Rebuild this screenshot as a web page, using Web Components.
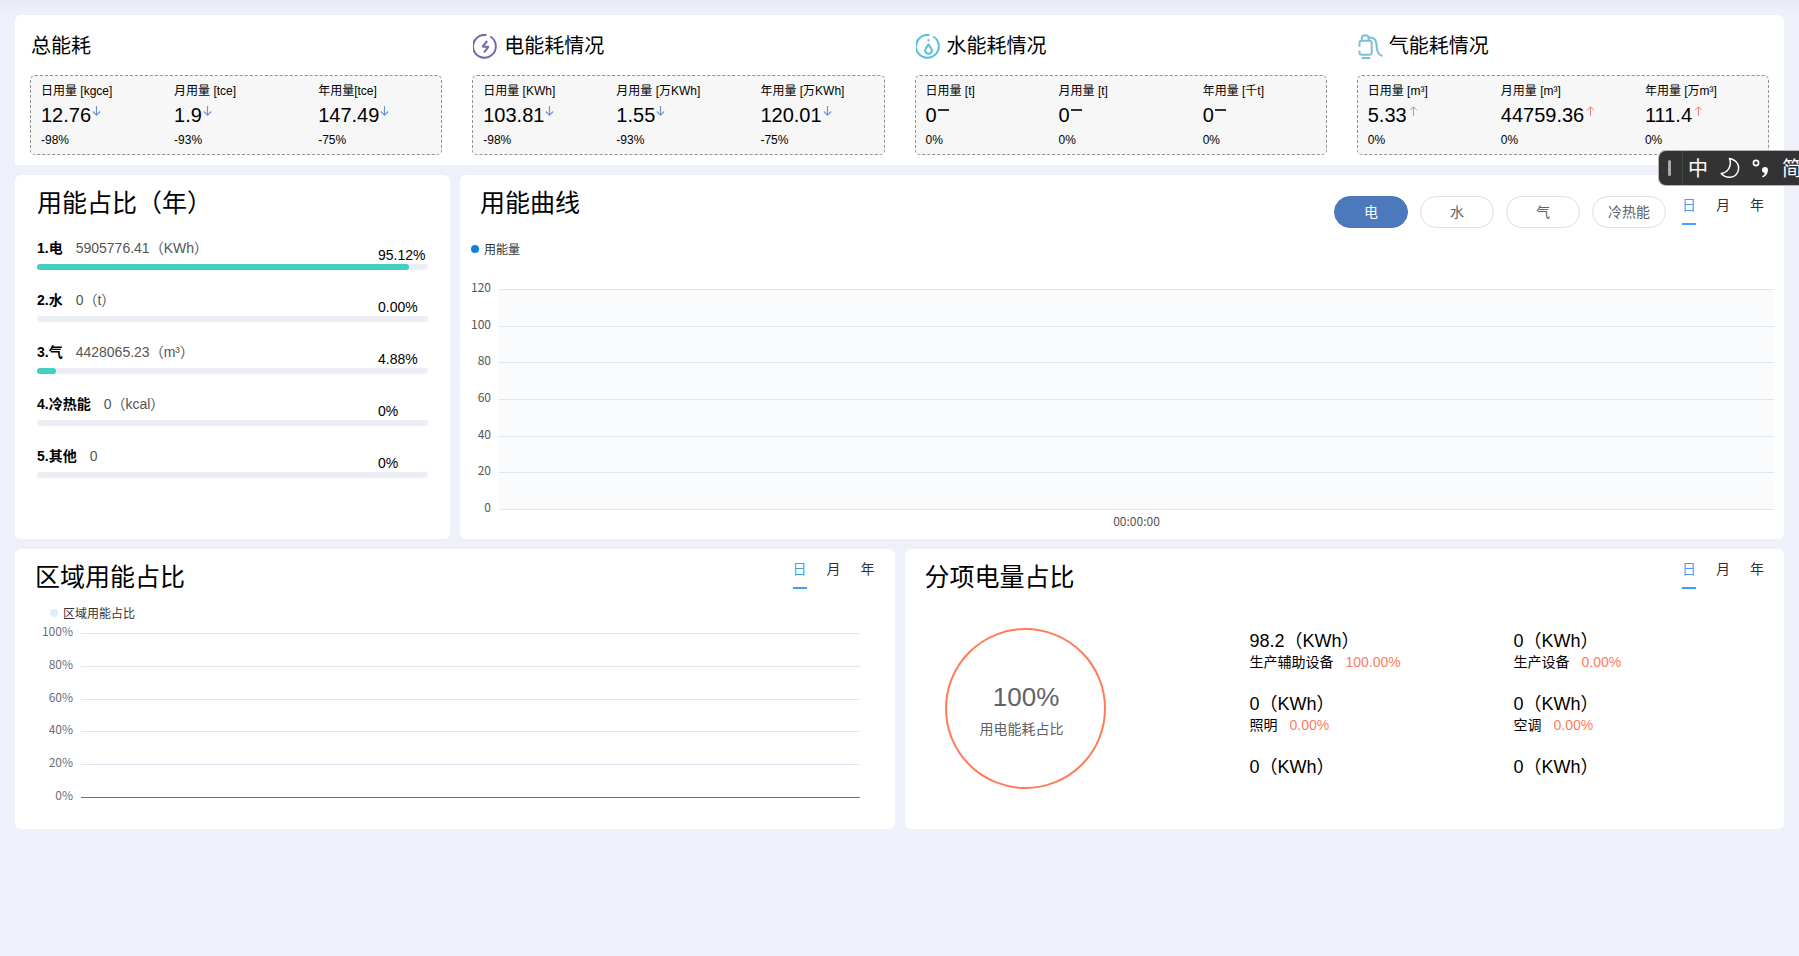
<!DOCTYPE html>
<html lang="zh-CN">
<head>
<meta charset="utf-8">
<title>能耗总览</title>
<style>
  html { background: #eef1f9; }
  body {
    margin: 0;
    overflow-x: hidden;
    font-family: "Liberation Sans", "Noto Sans CJK SC", sans-serif;
    font-size: 14px;
    color: #000;
  }
</style>
</head>
<body>
<energy-dashboard></energy-dashboard>

<template id="t-dashboard">
  <style>
    :host { display: block; padding: 15px; box-sizing: border-box; min-height: 100vh;
      background: linear-gradient(#e6e9f1, #eef1f9 12px) no-repeat #eef1f9; }
    main { display: grid; gap: 10px; }
    .summary { display: grid; grid-template-columns: repeat(4, minmax(0, 1fr));
      background: #fff; border-radius: 6px 6px 0 0; padding-bottom: 10px; }
    .middle { display: grid; grid-template-columns: 435fr 1324fr; gap: 10px; }
    .bottom { display: grid; grid-template-columns: 1fr 1fr; gap: 10px; }
    .middle > * { min-height: 364px; min-width: 0; }
    .bottom > * { min-height: 280px; min-width: 0; }
    .share-card { --inset: 22px; }
    .shares { display: grid; gap: 20px; padding: 19px 22px 0; }
    period-tabs.low { margin-top: 10px; }
    kind-pills { margin: 21px 16px 0 0; }
    .curve { padding: 13px 10px 10px 11px; --axis: 20px; --legend-gap: 32px; --plot: 221px; --fill: #fafbfd; --label: #555; --base: #e0e6f1; }
    .area { padding: 12px 35px 0 25px; --axis: 33px; --legend-gap: 12px; --plot: 165px; --label: #6e7079; --base: #6e7079; --legend-indent: 10px; }
    .items { display: flex; padding: 35px 20px 0; align-items: flex-start; }
    usage-ring { margin: 0 144px 0 20px; }
    .list { flex: 1; display: grid; grid-template-columns: 264px 1fr; row-gap: 21px; }
  </style>
  <main>
    <section class="summary">
      <metric-group heading="总能耗" data="日用量 [kgce]|12.76|down|-98%;月用量 [tce]|1.9|down|-93%;年用量[tce]|147.49|down|-75%"></metric-group>
      <metric-group heading="电能耗情况" icon="power" data="日用量 [KWh]|103.81|down|-98%;月用量 [万KWh]|1.55|down|-93%;年用量 [万KWh]|120.01|down|-75%"></metric-group>
      <metric-group heading="水能耗情况" icon="water" data="日用量 [t]|0|flat|0%;月用量 [t]|0|flat|0%;年用量 [千t]|0|flat|0%"></metric-group>
      <metric-group heading="气能耗情况" icon="gas" data="日用量 [m³]|5.33|up|0%;月用量 [m³]|44759.36|up|0%;年用量 [万m³]|111.4|up|0%"></metric-group>
    </section>
    <div class="middle">
      <panel-card class="share-card" heading="用能占比（年）">
        <div class="shares">
          <share-row name="1.电" amount="5905776.41（KWh）" percent="95.12%"></share-row>
          <share-row name="2.水" amount="0（t）" percent="0.00%"></share-row>
          <share-row name="3.气" amount="4428065.23（m³）" percent="4.88%"></share-row>
          <share-row name="4.冷热能" amount="0（kcal）" percent="0%"></share-row>
          <share-row name="5.其他" amount="0" percent="0%"></share-row>
        </div>
      </panel-card>
      <panel-card heading="用能曲线">
        <kind-pills slot="actions"></kind-pills>
        <period-tabs slot="actions" class="low"></period-tabs>
        <grid-chart class="curve" legend="用能量" dot="#0a84d8" ticks="120,100,80,60,40,20,0" category="00:00:00"></grid-chart>
      </panel-card>
    </div>
    <div class="bottom">
      <panel-card heading="区域用能占比">
        <period-tabs slot="actions"></period-tabs>
        <grid-chart class="area" legend="区域用能占比" dot="#dbefff" ticks="100%,80%,60%,40%,20%,0%"></grid-chart>
      </panel-card>
      <panel-card heading="分项电量占比">
        <period-tabs slot="actions"></period-tabs>
        <div class="items">
          <usage-ring value="100%" caption="用电能耗占比"></usage-ring>
          <div class="list">
            <usage-item value="98.2（KWh）" name="生产辅助设备" percent="100.00%"></usage-item>
            <usage-item value="0（KWh）" name="生产设备" percent="0.00%"></usage-item>
            <usage-item value="0（KWh）" name="照明" percent="0.00%"></usage-item>
            <usage-item value="0（KWh）" name="空调" percent="0.00%"></usage-item>
            <usage-item value="0（KWh）"></usage-item>
            <usage-item value="0（KWh）"></usage-item>
          </div>
        </div>
      </panel-card>
    </div>
  </main>
  <ime-bar></ime-bar>
</template>

<template id="t-panel">
  <style>
    :host { display: block; background: #fff; border-radius: 6px; }
    header { display: flex; align-items: flex-start; padding: 0 20px 0 var(--inset, 20px); min-height: 44px; }
    h2 { margin: 0 auto 0 0; padding-top: 12px; font-size: 25px; line-height: 32px; font-weight: 400; }
  </style>
  <header><h2></h2><slot name="actions"></slot></header>
  <slot></slot>
</template>

<template id="t-tabs">
  <style>
    :host { display: flex; gap: 20px; }
    button { all: unset; font-size: 14px; line-height: 40px; height: 38px; color: #303133; border-bottom: 2px solid transparent; cursor: pointer; }
    button[aria-pressed="true"] { color: #409eff; border-color: #409eff; }
  </style>
  <button aria-pressed="true">日</button><button aria-pressed="false">月</button><button aria-pressed="false">年</button>
</template>

<template id="t-pills">
  <style>
    :host { display: flex; gap: 12px; }
    button { box-sizing: border-box; width: 74px; height: 32px; padding: 0; border: 1px solid #dcdfe6; border-radius: 16px;
      background: #fff; color: #606266; font: inherit; font-size: 14px; line-height: 30px; cursor: pointer; }
    button[aria-pressed="true"] { background: #4b79bc; border-color: #4b79bc; color: #fff; }
  </style>
  <button aria-pressed="true">电</button><button aria-pressed="false">水</button><button aria-pressed="false">气</button><button aria-pressed="false">冷热能</button>
</template>

<template id="t-ime">
  <style>
    :host { position: absolute; right: 0; top: 150px; width: 141px; height: 36px; box-sizing: border-box; overflow: hidden;
      display: flex; align-items: center; background: #333; color: #fff; border: 1px solid #b5b5b5; border-right: 0;
      border-radius: 8px 0 0 8px; font-size: 20px; line-height: 34px; }
    i { flex: none; width: 3px; height: 16px; margin: 0 11px 0 9px; border-radius: 2px; background: #aaa; }
    b { flex: none; width: 1px; height: 34px; margin-right: 5px; background: #484848; }
    span, svg { flex: none; }
    span { padding-top: 2px; }
    svg.moon { margin: 0 12px; }
    svg.mark { margin-right: 13px; }
  </style>
  <i></i><b></b><span>中</span>
  <svg class="moon" width="20" height="22" viewBox="0 0 20 22" fill="none" stroke="#fff" stroke-width="1.5" stroke-linejoin="round"><path d="M9.5 1.5C17 3 20.500 9 17.500 15.500C14.500 21.500 6 22 1.200 16.500C8.500 15.500 12 8.500 9.500 1.500Z"/></svg>
  <svg class="mark" width="17" height="22" viewBox="0 0 17 22"><circle cx="4" cy="6" r="2.600" fill="none" stroke="#fff" stroke-width="1.600"/><path d="M10 19.200c2-.9 2.700-2 2.700-3.300a3 3 0 1 1 3.300-3.300c0 4-2 6.800-5.200 7.800z" fill="#fff"/></svg>
  <span>简</span>
</template>

<script>
  const ICONS = {
    power: '<svg width="25" height="25" viewBox="0 0 25 25" fill="none" stroke="#7469ae" stroke-width="2"><path d="M17.200 2.500A11.400 11.400 0 1 1 13.400 1.100"/><path d="M14.200 7L9.600 12.700H15.600L11 18.400" stroke-linejoin="bevel"/></svg>',
    water: '<svg width="25" height="25" viewBox="0 0 25 25" fill="none" stroke="#5bbfd6" stroke-width="2"><path d="M17.200 2.500A11.400 11.400 0 1 1 13.400 1.100"/><path d="M12.500 10.400c-1.900 2.600-3.400 4.400-3.400 6a3.400 3.400 0 0 0 6.800 0c0-1.600-1.500-3.400-3.400-6z" stroke-linejoin="round"/><path d="M12.500 5.200v2.200"/></svg>',
    gas: '<svg width="25" height="25" viewBox="0 0 25 25" fill="none" stroke="#80bdda" stroke-width="2"><path d="M1.500 13V9Q1.500 6.800 3.700 6.800H11.500Q13.700 6.800 13.700 9V18.500Q13.700 20.700 11.500 20.700H3.700Q1.500 20.700 1.500 18.500V16.500"/><path d="M3.800 6.600V4Q3.800 1.200 7.200 1.200Q10.600 1.200 10.600 4V6.600M3.500 24H12.200M11 3.500C18.500 3 18.500 9 18.800 14Q19.300 20.500 24.500 22"/></svg>'
  };
  const TRENDS = {
    down: '<svg class="down" width="9" height="10" viewBox="0 0 9 10" fill="none" stroke="#7394cb" stroke-width="1.200"><path d="M4.500 0V9M.8 5.500L4.500 9.200L8.200 5.500"/></svg>',
    up: '<svg class="up" width="9" height="10" viewBox="0 0 9 10" fill="none" stroke="#f08080" stroke-width="1"><path d="M4.500 10V1M1 4.300L4.500 .8L8 4.300"/></svg>',
    flat: '<svg class="flat" width="12" height="10" viewBox="0 0 12 10"><path d="M0 3h11v2H0z" fill="#303133"/></svg>'
  };

  class BaseElement extends HTMLElement {
    connectedCallback() {
      if (this.shadowRoot) return;
      const root = this.attachShadow({ mode: 'open' });
      if (this.constructor.template) {
        root.append(document.getElementById(this.constructor.template).content.cloneNode(true));
      } else {
        root.innerHTML = this.render();
      }
      this.ready?.();
    }
    attr(name) { return this.getAttribute(name) || ''; }
  }

  class PressGroup extends BaseElement {
    ready() {
      const buttons = [...this.shadowRoot.querySelectorAll('button')];
      buttons.forEach(b => b.addEventListener('click', () =>
        buttons.forEach(o => o.setAttribute('aria-pressed', String(o === b)))));
    }
  }
  class PeriodTabs extends PressGroup { static template = 't-tabs'; }
  class KindPills extends PressGroup { static template = 't-pills'; }
  class ImeBar extends BaseElement { static template = 't-ime'; }

  class PanelCard extends BaseElement {
    static template = 't-panel';
    ready() { this.shadowRoot.querySelector('h2').textContent = this.attr('heading'); }
  }

  class MetricGroup extends BaseElement {
    render() {
      const cells = this.attr('data').split(';').map(row => {
        const [label, value, trend, change] = row.split('|');
        return `<div><p>${label}</p><p class="value">${value}${TRENDS[trend]}</p><p class="change">${change}</p></div>`;
      }).join('');
      return `<style>
        :host { display: block; padding: 17px 15px 0; }
        h3 { display: flex; align-items: center; gap: 6px; height: 28px; margin: 0 0 15px; padding-left: 1px; font-size: 20px; line-height: 28px; font-weight: 400; }
        .box { display: grid; grid-template-columns: 133fr 144fr 113fr; padding: 7px 10px 5px; border: 1px dashed #909399; border-radius: 5px; background: #f7f7f7; }
        p { margin: 0; font-size: 12px; line-height: 16px; white-space: nowrap; }
        .value { display: flex; align-items: flex-start; font-size: 20px; line-height: 32px; }
        .change { line-height: 18px; }
        .value svg { margin: 7px 0 0 1px; }
        .value svg.up { margin-left: 2px; }
      </style><h3>${ICONS[this.attr('icon')] || ''}${this.attr('heading')}</h3><div class="box">${cells}</div>`;
    }
  }

  class ShareRow extends BaseElement {
    render() {
      const p = this.attr('percent');
      return `<style>
        :host { display: block; }
        .text { display: flex; height: 26px; margin: 0; }
        b { line-height: 20px; margin-right: 13px; }
        .amount { line-height: 20px; color: #555; }
        .pct { margin-left: auto; width: 50px; line-height: 18px; align-self: flex-end; }
        .bar { height: 6px; border-radius: 3px; background: #ebeef5; }
        .bar div { width: ${p}; height: 6px; border-radius: 3px; background: #42d0bd; }
      </style><p class="text"><b>${this.attr('name')}</b><span class="amount">${this.attr('amount')}</span><span class="pct">${p}</span></p>
      <div class="bar" role="progressbar" aria-label="${this.attr('name')}" aria-valuenow="${parseFloat(p)}"><div></div></div>`;
    }
  }

  class GridChart extends BaseElement {
    render() {
      const ticks = this.attr('ticks').split(',');
      const category = this.attr('category');
      return `<style>
        :host { display: block; font-family: "Noto Sans CJK SC", sans-serif; font-size: 12px; line-height: 16px; }
        .legend { display: flex; align-items: center; gap: 5px; margin-left: var(--legend-indent, 0); color: #333; }
        .legend i { width: 8px; height: 8px; border-radius: 4px; background: ${this.attr('dot')}; }
        .plot { display: grid; grid-template-columns: var(--axis) 1fr; column-gap: 8px; margin-top: calc(var(--legend-gap) - 10px); align-items: start; color: var(--label); }
        .labels, .lines { display: flex; flex-direction: column; justify-content: space-between; }
        .labels { height: calc(var(--plot) + 15px); text-align: right; }
        .lines { height: var(--plot); margin-top: 10px; background: var(--fill, transparent); }
        .lines i { height: 1px; background: #e0e6f1; }
        .lines i:last-child { background: var(--base); }
        .category { grid-column: 2; text-align: center; margin-top: -2px; }
      </style><div class="legend"><i></i>${this.attr('legend')}</div>
      <div class="plot"><div class="labels">${ticks.map(t => `<span>${t}</span>`).join('')}</div>
      <div class="lines">${ticks.map(() => '<i></i>').join('')}</div>${category ? `<div class="category">${category}</div>` : ''}</div>`;
    }
  }

  class UsageRing extends BaseElement {
    render() {
      return `<style>
        :host { flex: none; display: flex; flex-direction: column; align-items: center; box-sizing: border-box; width: 161px; height: 161px;
          padding-top: 49px; border: 2px solid #ff7b5a; border-radius: 50%; color: #606266; }
        strong { font-size: 26px; line-height: 36px; font-weight: 400; padding-left: 2px; }
        span { font-size: 14px; line-height: 20px; margin-top: 4px; padding-right: 7px; }
      </style><strong>${this.attr('value')}</strong><span>${this.attr('caption')}</span>`;
    }
  }

  class UsageItem extends BaseElement {
    render() {
      return `<style>
        :host { display: block; }
        p { margin: 0; font-size: 18px; line-height: 26px; }
        .name { display: flex; gap: 12px; font-size: 14px; line-height: 16px; }
        .name span { color: #ff7b5a; }
      </style><p>${this.attr('value')}</p>${this.attr('name') ? `<p class="name">${this.attr('name')}<span>${this.attr('percent')}</span></p>` : ''}`;
    }
  }

  class EnergyDashboard extends BaseElement { static template = 't-dashboard'; }

  customElements.define('metric-group', MetricGroup);
  customElements.define('panel-card', PanelCard);
  customElements.define('period-tabs', PeriodTabs);
  customElements.define('kind-pills', KindPills);
  customElements.define('share-row', ShareRow);
  customElements.define('grid-chart', GridChart);
  customElements.define('usage-ring', UsageRing);
  customElements.define('usage-item', UsageItem);
  customElements.define('ime-bar', ImeBar);
  customElements.define('energy-dashboard', EnergyDashboard);
</script>
</body>
</html>
